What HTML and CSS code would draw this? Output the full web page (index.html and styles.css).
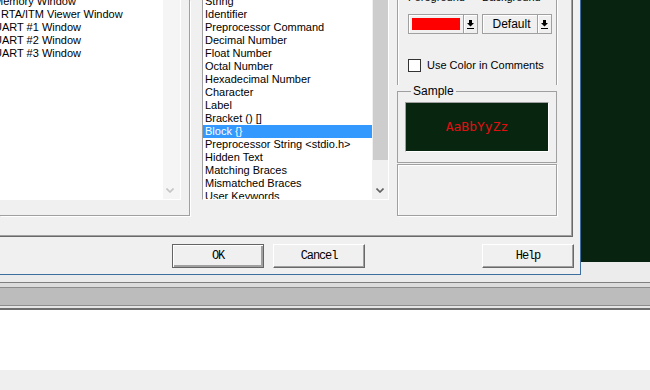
FILE: index.html
```html
<!DOCTYPE html>
<html lang="en">
<head>
  <meta charset="UTF-8">
  <meta name="viewport" content="width=device-width, initial-scale=1.0">
  <title>Configuration - Colors &amp; Fonts</title>
  <link rel="stylesheet" href="styles.css">
</head>
<body>
  <div class="screen">
    <div class="top">
      <div class="dialog-col">
        <div class="dialog">
          <div class="tabpanel">
            <div class="group-left">
              <div class="listbox listbox-left">
                <div class="items">
                  <ul>
                    <li>Memory Window</li>
                    <li class="shift">RTA/ITM Viewer Window</li>
                    <li>UART #1 Window</li>
                    <li>UART #2 Window</li>
                    <li>UART #3 Window</li>
                  </ul>
                </div>
                <div class="vscroll disabled">
                  <div class="track"></div>
                  <div class="arrow">
                    <svg width="8" height="5" viewBox="0 0 8 5"><path d="M0.5 0.5 L4 4 L7.5 0.5" fill="none" stroke="#c4c4c4" stroke-width="1.6"/></svg>
                  </div>
                </div>
              </div>
            </div>

            <div class="group-mid">
              <div class="listbox listbox-mid">
                <div class="items">
                  <ul>
                    <li>String</li>
                    <li>Identifier</li>
                    <li>Preprocessor Command</li>
                    <li>Decimal Number</li>
                    <li>Float Number</li>
                    <li>Octal Number</li>
                    <li>Hexadecimal Number</li>
                    <li>Character</li>
                    <li>Label</li>
                    <li>Bracket () []</li>
                    <li class="selected">Block {}</li>
                    <li>Preprocessor String &lt;stdio.h&gt;</li>
                    <li>Hidden Text</li>
                    <li>Matching Braces</li>
                    <li>Mismatched Braces</li>
                    <li>User Keywords</li>
                  </ul>
                </div>
                <div class="vscroll">
                  <div class="track"><div class="thumb"></div></div>
                  <div class="arrow">
                    <svg width="8" height="5" viewBox="0 0 8 5"><path d="M0.5 0.5 L4 4 L7.5 0.5" fill="none" stroke="#606060" stroke-width="1.6"/></svg>
                  </div>
                </div>
              </div>
            </div>

            <div class="group-right">
              <div class="color-box">
                <div class="color-labels">
                  <span>Foreground</span>
                  <span>Background</span>
                </div>
                <div class="pickers">
                  <div class="picker">
                    <div class="picker-main"><div class="swatch"></div></div>
                    <div class="picker-drop">
                      <svg width="7" height="9" viewBox="0 0 7 9"><path d="M2 0h3v3h2L3.5 6.5 0 3h2z" fill="#000"/><rect y="8" width="7" height="1" fill="#000"/></svg>
                    </div>
                  </div>
                  <div class="picker">
                    <div class="picker-main">Default</div>
                    <div class="picker-drop">
                      <svg width="7" height="9" viewBox="0 0 7 9"><path d="M2 0h3v3h2L3.5 6.5 0 3h2z" fill="#000"/><rect y="8" width="7" height="1" fill="#000"/></svg>
                    </div>
                  </div>
                </div>
                <label class="check">
                  <span class="box"></span>
                  <span>Use Color in Comments</span>
                </label>
              </div>
              <fieldset class="sample">
                <legend>Sample</legend>
                <div class="sample-view">AaBbYyZz</div>
              </fieldset>
              <div class="blank-box"></div>
            </div>
          </div>

          <div class="buttons">
            <button class="btn default">OK</button>
            <button class="btn">Cancel</button>
            <button class="btn help">Help</button>
          </div>
        </div>
        <div class="dialog-shadow"></div>
      </div>
      <div class="desk">
        <div class="editor"></div>
        <div class="desk-gap"></div>
      </div>
    </div>
    <div class="toolbar"></div>
    <div class="pane"></div>
    <div class="statusbar"></div>
  </div>
</body>
</html>
```

FILE: styles.css
```css
body {
  margin: 0;
  font-family: "Liberation Sans", Arial, sans-serif;
  font-size: 11px;
  color: #000;
}
.screen {
  width: 650px;
  height: 390px;
  overflow: hidden;
  background: #fff;
}
.top {
  display: flex;
  height: 282px;
}
.dialog-col {
  width: 581px;
  display: flex;
  flex-direction: column;
}
.dialog {
  height: 274px;
  background: #f0f0f0;
  border-right: 1px solid #3d6e9e;
  border-bottom: 1px solid #3d6e9e;
}
.dialog-shadow {
  flex: 1;
  background: #ebebeb;
}
.desk {
  flex: 1;
  display: flex;
  flex-direction: column;
}
.editor {
  height: 262px;
  background: #082410;
}
.desk-gap {
  flex: 1;
  background: #ececec;
}

/* tab page */
.tabpanel {
  width: 572px;
  height: 236px;
  border-right: 1px solid #696969;
  border-bottom: 1px solid #696969;
  box-shadow: inset -1px -1px #a0a0a0;
  display: flex;
  align-items: flex-start;
}
.group-left {
  width: 189px;
  height: 215px;
  border-right: 1px solid #a0a0a0;
  border-bottom: 1px solid #a0a0a0;
  box-shadow: 1px 1px #fff;
}
.group-mid {
  width: 195px;
  padding-left: 12px;
}
.group-right {
  width: 160px;
  display: flex;
  flex-direction: column;
}

/* list boxes */
.listbox {
  display: flex;
  height: 199px;
  background: #fff;
  border-bottom: 1px solid #fff;
}
.listbox .items {
  overflow: hidden;
}
.listbox ul {
  list-style: none;
  margin: -5px 0 0;
  padding: 0;
}
.listbox li {
  height: 13px;
  line-height: 13px;
  padding-left: 2px;
  white-space: nowrap;
}
.listbox li.selected {
  background: #3399ff;
  color: #fff;
}
.listbox-left {
  width: 180px;
  border-right: 1px solid #fff;
}
.listbox-left .items {
  width: 163px;
}
.listbox-left ul {
  margin-left: -8px;
}
.listbox-left li.shift {
  padding-left: 9px;
}
.listbox-mid {
  width: 185px;
  border-left: 1px solid #a0a0a0;
  border-right: 1px solid #fff;
}
.listbox-mid .items {
  width: 169px;
}
.vscroll {
  flex: 1;
  display: flex;
  flex-direction: column;
  background: #f0f0f0;
}
.vscroll.disabled {
  background: #f5f5f5;
}
.vscroll .track {
  flex: 1;
}
.vscroll .thumb {
  height: 160px;
  margin-left: 1px;
  background: #cdcdcd;
}
.vscroll .arrow {
  height: 17px;
  display: flex;
  align-items: center;
  justify-content: center;
}
.listbox-left .vscroll .arrow {
  padding-right: 3px;
}
.vscroll .arrow svg {
  display: block;
}

/* colour settings */
.color-box {
  height: 85px;
  padding-left: 10px;
  border-left: 1px solid #a0a0a0;
  border-right: 1px solid #a0a0a0;
  box-shadow: inset 1px 0 #fff, 1px 0 #fff;
}
.color-labels {
  display: flex;
  margin-top: -9px;
  height: 13px;
  line-height: 13px;
}
.color-labels span {
  width: 74px;
}
.pickers {
  display: flex;
  gap: 4px;
  margin-top: 10px;
}
.picker {
  width: 68px;
  height: 18px;
  display: flex;
  border: 1px solid #a0a0a0;
  box-shadow: inset 1px 1px #fff;
}
.picker-main {
  flex: 1;
  padding: 3px 0 0 3px;
  line-height: 13px;
  font-size: 12px;
  text-align: center;
}
.picker-main .swatch {
  width: 48px;
  height: 12px;
  background: #ff0000;
}
.picker-drop {
  width: 13px;
  border-left: 1px solid #a0a0a0;
  box-shadow: inset 1px 0 #fff;
  display: flex;
  align-items: center;
  justify-content: center;
}
.picker-drop svg {
  display: block;
}
.check {
  display: flex;
  align-items: center;
  gap: 6px;
  margin-top: 25px;
  line-height: 13px;
}
.check .box {
  width: 11px;
  height: 11px;
  border: 1px solid #333;
  background: #fff;
}
.sample {
  margin: 0;
  padding: 4px 0 10px 7px;
  border: 1px solid #a0a0a0;
  min-width: 0;
}
.sample legend {
  margin-left: 6px;
  padding: 0 2px;
  line-height: 13px;
  font-size: 12px;
}
.sample-view {
  width: 142px;
  height: 48px;
  border: 1px solid #a0a0a0;
  border-right-color: #fff;
  border-bottom-color: #fff;
  background: #082510;
  color: #e01010;
  font-family: "DejaVu Sans Mono", "Liberation Mono", monospace;
  font-size: 13px;
  line-height: 48px;
  text-align: center;
}
.blank-box {
  height: 50px;
  margin-top: 1px;
  border: 1px solid #a0a0a0;
  box-shadow: inset 1px 1px #fff, 1px 1px #fff;
}

/* dialog buttons */
.buttons {
  display: flex;
  gap: 9px;
  padding: 7px 6px 0 172px;
}
.btn {
  width: 92px;
  height: 24px;
  padding: 0;
  background: #f0f0f0;
  border: 1px solid;
  border-color: #fff #696969 #696969 #fff;
  box-shadow: inset -1px -1px #a0a0a0;
  font-family: "Liberation Mono", "Courier New", monospace;
  font-size: 12px;
  letter-spacing: -1.1px;
  color: #000;
}
.btn.default {
  border-color: #646464;
  box-shadow: inset 1px 1px #fff, inset -2px -2px #a0a0a0;
}
.btn.help {
  margin-left: auto;
}

/* main window below the dialog */
.toolbar {
  height: 28px;
  background: linear-gradient(to bottom,
    #7f7f7f 0 1px, #dcdcdc 1px 5px, #8c8c8c 5px 6px, #bcbcbc 6px 23px,
    #8c8c8c 23px 24px, #e4e4e4 24px 26px, #6e6e6e 26px 28px);
}
.pane {
  height: 60px;
  background: #fff;
}
.statusbar {
  height: 20px;
  background: #efefef;
  border-bottom: 1px solid #e0e0e0;
}
```
